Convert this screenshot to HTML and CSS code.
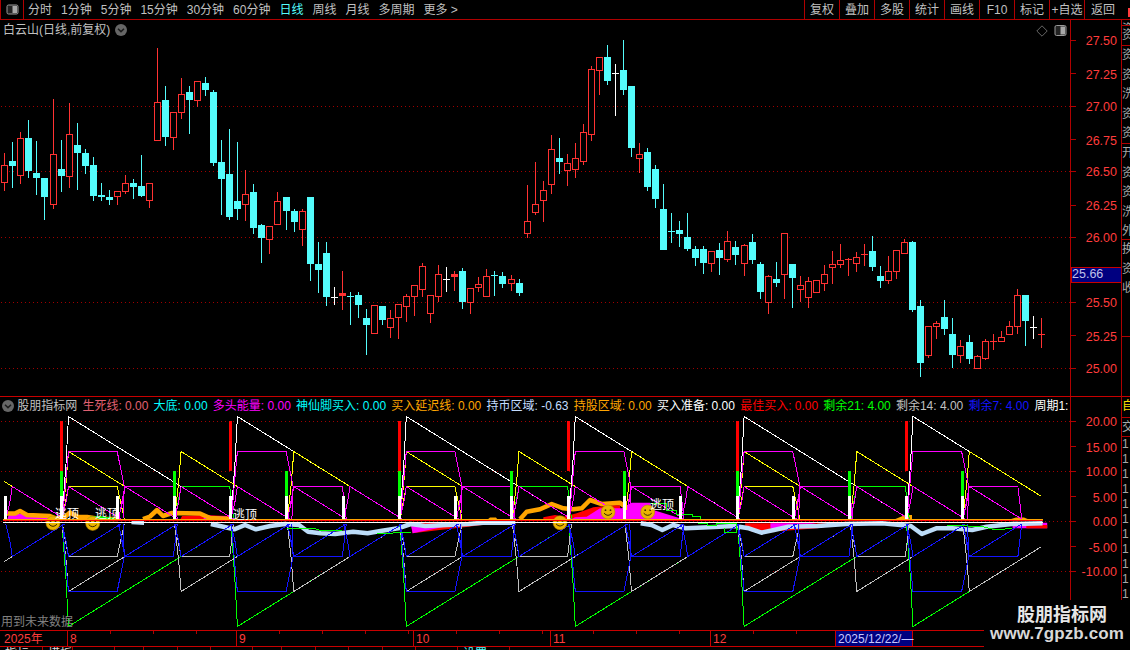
FILE: index.html
```html
<!DOCTYPE html>
<html lang="zh-CN">
<head>
<meta charset="utf-8">
<title>白云山 日线</title>
<link rel="stylesheet" href="styles.css">
</head>
<body>
<div class="app">
  <header class="toolbar">
    <button class="panel-btn" aria-label="面板">
      <svg class="panel-icon" width="13" height="11" viewBox="0 0 13 11"><rect x="1" y="1" width="11" height="9" rx="1.5" class="panel-outline"/><rect x="6.5" y="2" width="4.5" height="7" class="panel-fill"/></svg>
    </button>
    <nav class="periods">
      <span>分时</span><span>1分钟</span><span>5分钟</span><span>15分钟</span><span>30分钟</span><span>60分钟</span><span class="active">日线</span><span>周线</span><span>月线</span><span>多周期</span><span>更多 &gt;</span>
    </nav>
    <nav class="tools">
      <span>复权</span><span>叠加</span><span>多股</span><span>统计</span><span>画线</span><span>F10</span><span>标记</span><span>+自选</span><span class="tool-wide">返回</span>
    </nav>
    <i class="corner-mark"></i>
  </header>

  <div class="workspace">
    <main class="panels">
      <section class="kline">
        <svg id="kline" class="chart" width="1121" height="376" viewBox="0 20 1121 376">
          <g class="grid">
            <line x1="1" x2="1071" y1="106.5" y2="106.5"/><line x1="1" x2="1071" y1="171.5" y2="171.5"/><line x1="1" x2="1071" y1="237.5" y2="237.5"/><line x1="1" x2="1071" y1="302.5" y2="302.5"/><line x1="1" x2="1071" y1="368.5" y2="368.5"/>
          </g>
          <g id="candles"></g>
          <line class="axis-line" x1="1070.5" x2="1070.5" y1="20" y2="396"/>
          <g class="axis">
            <path class="ticks" d="M1071 40.5h5M1071 73.5h5M1071 106.5h5M1071 139.5h5M1071 171.5h5M1071 205.5h5M1071 237.5h5M1071 270.5h5M1071 302.5h5M1071 335.5h5M1071 368.5h5"/>
            <text x="1117" y="45">27.50</text><text x="1117" y="79">27.25</text><text x="1117" y="111">27.00</text><text x="1117" y="145">26.75</text><text x="1117" y="176">26.50</text><text x="1117" y="210">26.25</text><text x="1117" y="242">26.00</text><text x="1117" y="307">25.50</text><text x="1117" y="341">25.25</text><text x="1117" y="373">25.00</text>
          </g>
          <rect class="price-box" x="1071" y="267" width="50" height="15"/>
          <text class="price-now" x="1072" y="278">25.66</text>
        </svg>
        <div class="title">
          <span>白云山(日线,前复权)</span>
          <svg class="chev" width="12" height="12" viewBox="0 0 12 12"><circle cx="6" cy="6" r="6" class="chev-bg"/><path d="M3 4.8 6 7.6 9 4.8" class="chev-line"/></svg>
        </div>
        <div class="plot-tools">
          <svg width="12" height="12" viewBox="0 0 12 12"><path d="M6 .8 11.2 6 6 11.2 .8 6Z" class="diamond"/></svg>
          <svg width="13" height="13" viewBox="0 0 13 13"><rect x="1" y="1.5" width="11" height="10" rx="1.5" class="panel-outline"/><rect x="6.5" y="2.5" width="4.5" height="8" class="panel-fill"/></svg>
        </div>
      </section>

      <section class="indicator">
        <svg id="ind" class="chart" width="1121" height="233" viewBox="0 397 1121 233">
          <g class="grid">
            <line x1="1" x2="1071" y1="421.5" y2="421.5"/><line x1="1" x2="1071" y1="471.5" y2="471.5"/><line x1="1" x2="1071" y1="521.5" y2="521.5"/><line x1="1" x2="1071" y1="571.5" y2="571.5"/>
          </g>
          <g id="series"></g>
          <g class="marks">
            <text x="55" y="518">逃顶</text><text x="95" y="518">逃顶</text><text x="233" y="519">逃顶</text><text x="650" y="509">逃顶</text>
          </g>
          <line class="axis-line" x1="1070.5" x2="1070.5" y1="397" y2="600"/>
          <g class="axis">
            <path class="ticks" d="M1071 421.5h5M1071 446.5h5M1071 471.5h5M1071 496.5h5M1071 521.5h5M1071 546.5h5M1071 571.5h5"/>
            <text x="1117" y="426">20.00</text><text x="1117" y="452">15.00</text><text x="1117" y="476">10.00</text><text x="1117" y="502">5.00</text><text x="1117" y="526">0.00</text><text x="1117" y="552">-5.00</text><text x="1117" y="576">-10.00</text>
          </g>
          <text class="future" x="1" y="626">用到未来数据</text>
        </svg>
        <div class="legend">
          <svg class="chev" width="12" height="12" viewBox="0 0 12 12"><circle cx="6" cy="6" r="6" class="chev-bg"/><path d="M3 4.8 6 7.6 9 4.8" class="chev-line"/></svg>
          <span class="lg-name">股朋指标网</span>
          <span class="c-salmon">生死线: 0.00</span>
          <span class="c-cyan">大底: 0.00</span>
          <span class="c-magenta">多头能量: 0.00</span>
          <span class="c-cyan">神仙脚买入: 0.00</span>
          <span class="c-orange">买入延迟线: 0.00</span>
          <span class="c-pale">持币区域: -0.63</span>
          <span class="c-orange">持股区域: 0.00</span>
          <span class="c-white">买入准备: 0.00</span>
          <span class="c-red">最佳买入: 0.00</span>
          <span class="c-green">剩余21: 4.00</span>
          <span class="c-gray">剩余14: 4.00</span>
          <span class="c-blue">剩余7: 4.00</span>
          <span class="c-white">周期1:</span>
        </div>
      </section>
    </main>

    <aside class="side">
      <div class="side-top">
        <div class="side-group g1"><p>资金</p></div>
        <div class="side-group g2"><p>资金</p><p>洗盘</p><p>资金</p><p>资金</p><p>资金</p></div>
        <div class="side-group g3"><p>资金</p><p>资金</p><p>洗盘</p><p>资金</p><p>资金</p></div>
        <div class="side-group g4"><p>开盘</p><p>资金</p><p>资金</p><p>洗盘</p><p>外盘</p></div>
        <div class="side-group g5"><p>换手</p><p>资金</p><p>收盘</p></div>
      </div>
      <div class="side-bottom">
        <div class="side-group g6"><p class="side-y">自选</p></div>
        <div class="side-group g7"><p>交易</p></div>
        <div class="side-nums"><p>1</p><p>1</p><p>1</p><p>1</p><p>1</p><p>1</p><p>1</p><p>1</p><p>1</p><p>1</p><p>1</p><p>1</p></div>
      </div>
    </aside>
  </div>

  <footer class="foot">
    <div class="dates">
      <span class="seg seg-year">2025年</span><span class="seg seg-8">8</span><span class="seg seg-9">9</span><span class="seg seg-10">10</span><span class="seg seg-11">11</span><span class="seg seg-12">12</span><span class="seg seg-cur">2025/12/22/—</span>
    </div>
    <div class="tabs">
      <span class="tab t1">指标</span><span class="tab t2">模板</span><span class="tab t3"></span><span class="tab t4"></span><span class="tab t5"></span><span class="tab t6"></span><span class="tab t3"></span><span class="tab t4"></span><span class="tab t5"></span><span class="tab t6"></span><span class="tab t5"></span><span class="tab t6"></span><span class="tab t3"></span><span class="tab t8">设置</span>
    </div>
  </footer>

  <div class="watermark">
    <b class="wm-cn">股朋指标网</b>
    <b class="wm-en">www.7gpzb.com</b>
  </div>
</div>
<script src="chart.js"></script>
</body>
</html>
```
FILE: styles.css
```css
:root {
  --line: #b00000;
  --line-hi: #c80000;
  --axis-text: #ff3c3c;
  --text: #c0c0c0;
  --cyan: #54fcfc;
}
* { box-sizing: border-box; }
html, body { margin: 0; padding: 0; background: #000; }
body { font: 12px/1 "Liberation Sans", "Noto Sans CJK SC", sans-serif; color: var(--text); }
.app { position: relative; width: 1130px; height: 650px; overflow: hidden; display: flex; flex-direction: column; background: #000; }

/* toolbar */
.toolbar { position: relative; flex: none; height: 20px; display: flex; align-items: stretch; border-bottom: 1px solid var(--line); }
.panel-btn { flex: none; width: 24px; padding: 0; background: #000; border: 0; border-left: 1px solid var(--line); border-right: 1px solid var(--line); display: flex; align-items: center; justify-content: center; }
.panel-outline { fill: #222; stroke: #9a9a9a; stroke-width: 1; }
.panel-fill { fill: #a8a8a8; }
.periods { display: flex; align-items: center; gap: 9px; padding-left: 4px; flex: 1; }
.periods .active { color: var(--cyan); }
.tools { display: flex; align-items: stretch; margin-right: 9px; }
.tools span { width: 35px; border-left: 1px solid var(--line); display: flex; align-items: center; justify-content: center; white-space: nowrap; }
.tools .tool-wide { width: 37px; }
.corner-mark { position: absolute; right: 0; top: 8px; width: 2px; height: 9px; background: #ff3c3c; }

/* main */
.workspace { flex: none; height: 610px; display: flex; }
.panels { flex: none; width: 1121px; display: flex; flex-direction: column; }
.kline { position: relative; flex: none; height: 376px; }
.indicator { position: relative; flex: none; height: 234px; border-top: 1px solid var(--line-hi); }
.chart { display: block; }
.grid line { stroke: #a00000; stroke-width: 1; stroke-dasharray: 1 3; shape-rendering: crispEdges; }
.axis-line { stroke: var(--line); stroke-width: 1; shape-rendering: crispEdges; }
.axis text { fill: var(--axis-text); font-size: 12.5px; text-anchor: end; }
.ticks { stroke: var(--line); stroke-width: 1; fill: none; shape-rendering: crispEdges; }
.price-box { fill: #000080; stroke: var(--line-hi); stroke-width: 1; shape-rendering: crispEdges; }
.price-now { fill: #c0c0e8; font-size: 12.5px; }

.title { position: absolute; left: 3px; top: 3px; height: 13px; display: flex; align-items: center; gap: 5px; white-space: nowrap; }
.chev { flex: none; }
.chev-bg { fill: #666; }
.chev-line { fill: none; stroke: #1c1c1c; stroke-width: 1.5; }
.plot-tools { position: absolute; left: 1036px; top: 4px; display: flex; align-items: center; gap: 6px; }
.diamond { fill: none; stroke: #666; stroke-width: 1; }

.legend { position: absolute; left: 2px; top: 1px; width: 1068px; height: 15px; display: flex; align-items: center; gap: 5.2px; overflow: hidden; white-space: nowrap; }
.legend span { flex: none; }
.legend .chev { margin-right: -2px; }
.lg-name { color: var(--text); }
.c-salmon { color: #e06070; }
.c-cyan { color: #00ffff; }
.c-magenta { color: #ff00ff; }
.c-orange { color: #ffa500; }
.c-pale { color: #c4ddff; }
.c-white { color: #fff; }
.c-red { color: #f00; }
.c-green { color: #0f0; }
.c-gray { color: #c0c0c0; }
.c-blue { color: #1414ff; }
.marks text { fill: #fff; font-size: 12px; }
.future { fill: #808080; font-size: 12px; }

/* right column */
.side { flex: none; width: 9px; border-left: 1px solid var(--line); overflow: hidden; display: flex; flex-direction: column; font-size: 12px; color: #a8a8a8; }
.side p { margin: 0; white-space: nowrap; }
.side-top { flex: none; height: 376px; overflow: hidden; }
.side-bottom { flex: none; height: 234px; overflow: hidden; border-top: 1px solid var(--line-hi); }
.side-group { border-bottom: 1px solid var(--line); overflow: hidden; }
.side-group p { height: 19.5px; line-height: 19.5px; }
.g1 { height: 6px; }
.g2 { height: 20px; }
.g3 { height: 98px; }
.g4 { height: 96px; }
.g5 { height: 97px; }
.g6 { height: 21px; }
.g7 { height: 19px; }
.side-y { color: #ffe000; }
.side-nums p { height: 15px; line-height: 15px; }

/* bottom */
.foot { flex: none; height: 20px; display: flex; flex-direction: column; }
.dates { flex: none; height: 17px; width: 984px; display: flex; border-top: 1px solid var(--line-hi); border-bottom: 1px solid var(--line-hi); color: var(--axis-text); }
.seg { flex: none; padding-left: 2px; display: flex; align-items: center; border-left: 1px solid var(--line-hi);
  background: repeating-linear-gradient(90deg, transparent 0 42px, var(--line) 42px 43px) no-repeat 0 0 / 100% 3px; }
.seg-year { width: 67px; padding-left: 4px; border-left: 0; background: none; }
.seg-8 { width: 169px; }
.seg-9 { width: 177px; }
.seg-10 { width: 137px; }
.seg-11 { width: 160px; }
.seg-12 { width: 125px; }
.seg-cur { width: 78px; background: #000080; color: #c8c8ff; border-right: 1px solid var(--line-hi); white-space: nowrap; }
.tabs { flex: none; height: 3px; display: flex; overflow: hidden; }
.tab { flex: none; height: 12px; padding-left: 5px; border-right: 1px solid var(--line); color: #ddd; line-height: 14px; }
.t1 { width: 43px; }
.t2 { width: 30px; }
.t3 { width: 42px; }
.t4 { width: 29px; }
.t5 { width: 34px; }
.t6 { width: 33px; }
.t8 { width: 52px; color: var(--cyan); }

.watermark { position: absolute; right: 0; bottom: 0; width: 146px; height: 50px; background: #000; display: flex; flex-direction: column; align-items: center; padding-top: 3px; gap: 1px; }
.wm-cn { margin-left: 10px; font: bold 18px/20px "Noto Sans CJK SC", sans-serif; color: #e6e6e6; }
.wm-en { font: bold 17px/20px "Liberation Sans", sans-serif; color: #d8d8d8; letter-spacing: .1px; }

/* drawn by chart.js */
.wick-r, .fill-r { fill: #ff3232; }
.wick-c, .fill-c { fill: var(--cyan); }
.wick-w, .fill-w { fill: #fff; }
.hollow { fill: #000; stroke: #ff3232; stroke-width: 1; }
#candles, .crisp { shape-rendering: crispEdges; }
.l { fill: none; stroke-width: 1; shape-rendering: crispEdges; }
.s-white { stroke: #fff; }
.s-yellow { stroke: #ffff00; }
.s-magenta { stroke: #ff00ff; }
.s-green { stroke: #00ff00; }
.s-gray { stroke: #c0c0c0; }
.s-blue { stroke: #1414ff; }
.a-red { fill: #f00; }
.a-magenta { fill: #f0f; }
.a-orange { fill: #ffa500; }
.a-green { fill: #0f0; }
.thick-orange { fill: none; stroke: #ffa500; stroke-width: 4.5; stroke-linejoin: round; }
.thick-pale { fill: none; stroke: #bcdcf8; stroke-width: 4.5; stroke-linejoin: round; }
.smile-face { fill: #eab400; stroke: #b88a00; stroke-width: .6; }
.smile-line { fill: none; stroke: #3a2a00; stroke-width: 1; }
.smile-eye { fill: #3a2a00; }
.b-white { fill: #fff; }
.b-green { fill: #0f0; }
.b-red { fill: #f00; }
.band-o { fill: #ffa500; }
.band-r { fill: #f00; }
.band-c { fill: #4ff; }
.band-w { fill: #fff; }
```
FILE: chart.js
```js
var NS = 'http://www.w3.org/2000/svg';
function el(parent, tag, attrs) {
  var e = document.createElementNS(NS, tag);
  for (var k in attrs) e.setAttribute(k, attrs[k]);
  parent.appendChild(e);
  return e;
}

/* wick top, wick bottom, body top, body bottom, kind */
var K = [
[153,191,165,183,'r'],[142,188,161,166,'c'],[132,184,138,176,'r'],[120,178,138,171,'c'],[141,195,173,178,'c'],[178,220,178,197,'c'],
[99,209,154,205,'r'],[140,192,169,176,'c'],[103,188,134,177,'r'],[123,190,145,153,'c'],[149,174,153,166,'c'],[157,201,165,196,'c'],
[183,201,195,197,'c'],[190,205,197,200,'c'],[191,205,191,197,'r'],[175,194,183,192,'r'],[179,199,183,187,'c'],[155,197,186,196,'c'],[183,208,183,201,'r'],
[48,141,102,141,'r'],[86,146,100,137,'c'],[112,150,112,138,'r'],[78,119,94,113,'r'],[86,134,92,100,'c'],[81,107,81,101,'r'],[77,96,83,90,'c'],
[90,166,92,163,'c'],[140,215,162,179,'c'],[129,220,174,217,'c'],[142,220,201,209,'c'],[170,221,194,205,'r'],[184,234,192,228,'c'],
[224,263,225,238,'c'],[226,254,226,240,'r'],[192,225,201,225,'r'],[197,230,197,211,'c'],[209,232,211,222,'c'],[209,246,211,230,'r'],
[197,281,197,264,'c'],[242,293,264,270,'c'],[242,306,253,297,'c'],[287,305,297,297,'w'],[271,310,293,296,'r'],[292,325,296,296,'c'],
[292,318,295,305,'c'],[309,355,318,325,'c'],[305,334,305,334,'r'],[306,325,306,320,'c'],[310,338,318,328,'r'],[304,339,304,318,'r'],
[294,322,296,307,'r'],[285,316,285,297,'r'],[263,297,266,290,'r'],[295,323,295,314,'r'],[265,302,274,297,'r'],[267,292,279,279,'w'],
[271,291,274,277,'r'],[268,309,271,302,'c'],[288,314,288,303,'r'],[277,292,284,288,'r'],[269,297,276,297,'r'],[271,296,275,275,'c'],
[272,288,276,284,'c'],[275,291,279,284,'r'],[279,296,283,293,'c'],
[185,238,221,234,'r'],[162,215,204,213,'r'],[181,222,190,201,'r'],[135,194,149,185,'r'],[138,174,158,162,'c'],
[154,186,163,171,'r'],[143,178,158,170,'r'],[124,165,132,162,'r'],[66,141,69,135,'r'],[57,95,57,71,'r'],[45,85,57,81,'c'],
[64,116,73,73,'w'],[40,95,70,90,'c'],[86,157,86,148,'c'],[143,173,154,159,'r'],[148,191,152,187,'c'],[165,208,169,199,'c'],
[184,250,209,250,'c'],[213,243,231,231,'c'],[221,247,230,234,'c'],[213,251,237,249,'c'],[246,266,249,258,'c'],[246,274,249,263,'c'],
[251,272,251,264,'r'],[243,275,250,258,'c'],[231,262,241,260,'r'],[241,265,247,255,'c'],[244,276,245,264,'r'],[234,264,242,260,'c'],
[262,299,264,292,'c'],[275,314,276,303,'r'],[262,287,279,283,'c'],[233,299,233,275,'r'],[264,308,264,278,'c'],[276,302,285,290,'r'],
[277,308,281,298,'r'],[280,293,280,293,'r'],[265,291,274,284,'r'],[251,284,264,268,'r'],[244,268,260,265,'r'],[258,276,259,260,'r'],
[252,272,257,264,'r'],[244,266,254,255,'r'],[236,271,251,267,'c'],[266,288,276,281,'c'],[256,284,271,281,'r'],[250,279,250,272,'r'],
[239,254,242,254,'r'],[241,312,242,310,'c'],[300,377,306,363,'c'],[326,358,326,356,'r'],[321,339,323,327,'r'],[300,335,317,329,'c'],
[318,368,334,355,'c'],[340,363,346,356,'r'],[335,364,342,359,'c'],[355,369,356,369,'r'],[339,360,341,359,'r'],[334,350,341,342,'r'],
[331,342,337,342,'r'],[321,335,326,335,'r'],[289,334,295,327,'r'],[295,346,295,321,'c'],[316,339,327,327,'w'],[318,348,334,335,'r']
];

var candles = document.getElementById('candles');
K.forEach(function (c, i) {
  var x = Math.round(4.3 + 8.035 * i);
  var h = c[3] - c[2];
  el(candles, 'rect', { x: x, y: c[0], width: 1, height: c[1] - c[0], 'class': 'wick-' + c[4] });
  if (c[4] === 'r' && h > 3) {
    el(candles, 'rect', { x: x - 2.5, y: c[2] + 0.5, width: 6, height: h - 1, 'class': 'hollow' });
  } else {
    el(candles, 'rect', { x: x - 3, y: c[2], width: 7, height: Math.max(h, 1), 'class': 'fill-' + c[4] });
  }
});

/* indicator */
var g = document.getElementById('series');
var S = function (k) { return 12.25 + 56.3 * k; };
var END = 1040.7;
function pts(list) { return list.map(function (p) { return p[0].toFixed(1) + ',' + p[1].toFixed(1); }).join(' '); }
function line(list, sign, cls) {
  el(g, 'polyline', { points: pts(list.map(function (p) { return [p[0], 521.5 - 5 * sign * p[1]]; })), 'class': 'l ' + cls });
}
function area(list, cls) { el(g, 'polygon', { points: pts(list), 'class': cls }); }
function thick(list, cls) { el(g, 'polyline', { points: pts(list), 'class': cls }); }
function z7(x, y) { return [x / 2.775, 510 + y / 3]; }
function z8(x, y) { return [565 + x / 2.775, 510 + y / 3]; }
function z10(x, y) { return [520 + x / 3, 480 + y / 3]; }

/* filled energy areas */
area([[7, 520], [9, 514], [30, 514], [55, 516], [58, 520]], 'a-magenta');
area([[30, 515.5], [32, 513.5], [50, 514.5], [52, 516.5]], 'a-red');
area([[90, 520], [92, 516], [115, 518], [118, 520]], 'a-green');
area([[180, 520], [182, 516], [203, 515], [228, 516], [228, 520]], 'a-red');
area([[203, 520], [205, 515.5], [227, 516.5], [228, 520]], 'a-magenta');

thick([[5, 513.5], [15, 513.5], [20, 511], [27, 515], [50, 516], [55, 518], [63, 518.5], [70, 512.5], [78, 517], [87, 517], [100, 519], [117, 519]], 'thick-orange');
thick([[143, 519], [150, 516.5], [157, 510], [163, 516], [172, 513], [200, 513.5], [210, 518], [230, 519]], 'thick-orange');

area([z10(70, 120), z10(70, 112), z10(105, 105), z10(130, 110), z10(170, 100), z10(220, 82), z10(280, 76), z10(300, 76), z10(305, 120)], 'a-red');
thick([z10(0, 118), z10(20, 95), z10(60, 88), z10(95, 72), z10(130, 85), z10(160, 88), z10(185, 85), z10(210, 60), z10(245, 72), z10(300, 68), z10(330, 92), z10(340, 110)], 'thick-orange');
area([z10(150, 120), z10(165, 112), z10(200, 110), z10(240, 85), z10(305, 85), z10(335, 68), z10(390, 68), z10(400, 90), z10(480, 115), z10(480, 120)], 'a-magenta');
area([[893, 520], [905, 515], [912, 515], [912, 520]], 'a-orange');
area([[1008, 520], [1016, 517.5], [1024, 517.5], [1030, 520]], 'a-orange');
area([[487, 520], [490, 517.5], [496, 517.5], [498, 520]], 'a-orange');

/* negative side areas */
area([z7(1140, 36), z7(1400, 36), z7(1300, 50), z7(1220, 60), z7(1145, 70)], 'a-red');
area([z7(1140, 42), z7(1270, 42), z7(1190, 60), z7(1145, 70)], 'a-magenta');
area([z8(500, 40), z8(790, 40), z8(700, 55), z8(610, 62), z8(520, 65), z8(500, 55)], 'a-red');
area([z8(570, 40), z8(700, 40), z8(620, 50), z8(585, 58), z8(570, 55)], 'a-magenta');
area([z8(1242, 38), z8(1338, 38), z8(1338, 55), z8(1242, 55)], 'a-magenta');
area([z8(1280, 45), z8(1338, 45), z8(1338, 55), z8(1280, 55)], 'a-red');

/* pale holding line */
thick([z7(365, 36), z7(400, 38)], 'thick-pale');
thick([z7(585, 42), z7(620, 50), z7(650, 58), z7(680, 45), z7(710, 58), z7(750, 48), z7(790, 42), z7(830, 45), z7(855, 65), z7(890, 70), z7(930, 72), z7(980, 65), z7(1020, 70), z7(1060, 62), z7(1105, 55), z7(1140, 42), z7(1180, 48), z7(1240, 45), z7(1300, 42), z7(1340, 38), z7(1430, 38)], 'thick-pale');
thick([z8(210, 40), z8(240, 45), z8(270, 60), z8(300, 45), z8(335, 55), z8(400, 52), z8(470, 48), z8(510, 55), z8(545, 68), z8(580, 60), z8(620, 50), z8(700, 48), z8(780, 42), z8(880, 40), z8(960, 48), z8(990, 72), z8(1030, 55), z8(1075, 55), z8(1130, 60), z8(1170, 50), z8(1240, 42), z8(1325, 40)], 'thick-pale');

/* saw-tooth count-downs, above and mirrored below: one candle is one unit */
var STEP = 56.3 / 7;
function saw(k, v, sign, cls) {
  var s = S(k);
  var p = [[s - 6.5, 0.5], [s - 2.5, v * 0.55], [s, v]];
  var endX = s + (v - 0.5) * STEP;
  var endV = 0.5;
  if (endX > END) { endX = END; endV = v - (END - s) / STEP; }
  p.push([endX, endV]);
  line(p, sign, cls);
}
function flat(k, v, sign, cls) {
  var s = S(k);
  var p = [[s - 6, 0.5], [s - 3, v * 0.55], [s, v], [s + 48.6, v]];
  if (v === 14) { p.push([s + 55.7, 7], [s + 54.5, 0.5]); } else { p.push([s + 52.5, 0.5]); }
  line(p, sign, cls);
}
function yflat(k, sign, cls) {
  var s = S(k);
  line([[s - 6, 0.5], [s - 3, 4], [s, 7], [s + 48.6, 7], [s + 55.7, 0.5]], sign, cls);
}
[1, -1].forEach(function (sign) {
  var c21 = sign > 0 ? 's-white' : 's-green';
  var c14 = sign > 0 ? 's-yellow' : 's-gray';
  var c7 = sign > 0 ? 's-magenta' : 's-blue';
  var k;
  for (k = 1; k < 18; k += 3) saw(k, 21, sign, c21);
  line([[4.3, 8], [S(0), 7]], sign, c14);
  for (k = 1; k < 18; k += 2) saw(k, 14, sign, c14);
  for (k = 0; k < 18; k++) {
    var m = k % 6;
    if (m === 1) yflat(k, sign, c14);
    if (m === 3) flat(k, 7, sign, sign > 0 ? 's-green' : 's-gray');
  }
  for (k = 0; k < 18; k++) saw(k, 7, sign, c7);
  for (k = 0; k < 18; k++) {
    var q = k % 6;
    if (q === 1 || q === 4) flat(k, 14, sign, c7);
    if (q === 2 || q === 5) flat(k, 7, sign, c7);
  }
});

/* little green step lines */
function green(list) { el(g, 'polyline', { points: pts(list), 'class': 'l s-green' }); }
green([[650, 503], [666, 503], [666, 510], [676, 510], [676, 514], [692, 514], [692, 516.5], [700, 516.5], [700, 519]]);
green([[698, 523], [707, 523], [707, 525], [716, 525], [716, 523], [736, 523], [736, 532], [724, 532], [724, 528]]);
green(([[795, 55], [870, 55], [890, 62], [950, 62]]).map(function (p) { return z7(p[0], p[1]); }));
green(([[1045, 70], [1140, 68]]).map(function (p) { return z7(p[0], p[1]); }));
green(([[1060, 45], [1160, 50], [1195, 60], [1240, 55]]).map(function (p) { return z8(p[0], p[1]); }));
area([[90, 516.5], [100, 516], [115, 518], [115, 519], [90, 519]], 'a-green');

/* trigger bars */
for (var b = 0; b < 18; b++) {
  var x = Math.round(S(b) - 8.5);
  el(g, 'rect', { x: x, y: 496, width: 3, height: 25, 'class': 'b-white crisp' });
  if (b % 2 === 1) el(g, 'rect', { x: x, y: 471, width: 3, height: 25, 'class': 'b-green crisp' });
  if (b % 3 === 1) el(g, 'rect', { x: x, y: 421, width: 3, height: 50, 'class': 'b-red crisp' });
}

/* smileys */
function smile(cx, cy) {
  var s = el(g, 'g', { transform: 'translate(' + cx + ' ' + cy + ')' });
  el(s, 'circle', { r: 7, 'class': 'smile-face' });
  el(s, 'circle', { cx: -2.5, cy: -1.8, r: 0.9, 'class': 'smile-eye' });
  el(s, 'circle', { cx: 2.5, cy: -1.8, r: 0.9, 'class': 'smile-eye' });
  el(s, 'path', { d: 'M-4 1.2Q0 5.5 4 1.2', 'class': 'smile-line' });
}
smile(53, 523); smile(92.7, 523.4); smile(560, 522.7); smile(608, 512); smile(647.7, 512);

/* zero band */
el(g, 'rect', { x: 3, y: 519, width: 1040, height: 1, 'class': 'band-o crisp' });
el(g, 'rect', { x: 3, y: 520, width: 1040, height: 1, 'class': 'band-r crisp' });
el(g, 'rect', { x: 3, y: 522, width: 1040, height: 1, 'class': 'band-w crisp' });
```
